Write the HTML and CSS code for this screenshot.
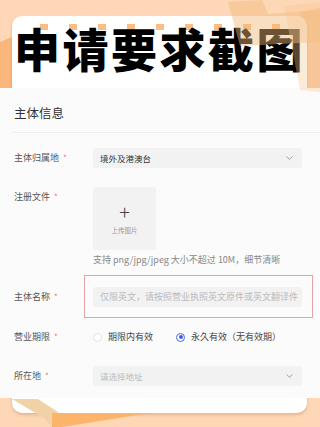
FILE: index.html
```html
<!DOCTYPE html>
<html lang="zh">
<head>
    <meta charset="UTF-8">
    <meta name="viewport" content="width=device-width, initial-scale=1.0">
    <title>申请要求截图</title>
    <link rel="stylesheet" href="styles.css">
</head>
<body>
    <div class="page">
        <svg class="deco deco-back" width="320" height="427" viewBox="0 0 320 427">
            <polygon points="0,42 14,36 14,90 0,90" fill="#fbb67c"/>
            <polygon points="300,12 320,8 320,90 300,90" fill="#f8c79b"/>
        </svg>

        <div class="card">
            <div class="banner">
                <div class="dots">
                    <span></span><span></span><span></span><span></span><span></span>
                    <span></span><span></span><span></span><span></span>
                </div>
                <h1 class="title">申请要求截图</h1>
            </div>

            <div class="shot">
                <div class="shot-head">主体信息</div>

                <div class="form">
                    <div class="row row-select">
                        <label>主体归属地<i>*</i></label>
                        <div class="select">
                            <span>境外及港澳台</span>
                            <svg class="chev" width="7" height="4" viewBox="0 0 7 4"><path d="M0.5 0.5 L3.5 3.3 L6.5 0.5" fill="none" stroke="#999" stroke-width="0.9"/></svg>
                        </div>
                    </div>

                    <div class="row row-upload">
                        <label>注册文件<i>*</i></label>
                        <div>
                            <div class="upload">
                                <span class="plus">+</span>
                                <span class="upload-text">上传图片</span>
                            </div>
                            <p class="hint">支持 png/jpg/jpeg 大小不超过 10M，细节清晰</p>
                        </div>
                    </div>

                    <div class="row row-name">
                        <label>主体名称<i>*</i></label>
                        <div class="mark">
                            <div class="input">仅限英文，请按照营业执照英文原件或英文翻译件</div>
                        </div>
                    </div>

                    <div class="row row-radio">
                        <label>营业期限<i>*</i></label>
                        <div class="radios">
                            <span class="radio"><b class="dot"></b>期限内有效</span>
                            <span class="radio checked"><b class="dot"></b>永久有效（无有效期）</span>
                        </div>
                    </div>

                    <div class="row row-select row-addr">
                        <label>所在地<i>*</i></label>
                        <div class="select">
                            <span class="ph">请选择地址</span>
                            <svg class="chev" width="7" height="4" viewBox="0 0 7 4"><path d="M0.5 0.5 L3.5 3.3 L6.5 0.5" fill="none" stroke="#999" stroke-width="0.9"/></svg>
                        </div>
                    </div>
                </div>
            </div>
        </div>

        <svg class="deco deco-front" width="320" height="427" viewBox="0 0 320 427">
            <polygon points="228,2 262,0 268,14 320,10 320,42 240,46" fill="#f2b877" fill-opacity="0.45"/>
            <polygon points="284,6 320,2 320,92 300,90" fill="#f6c592" fill-opacity="0.35"/>
            <polygon points="12,399 38,399 58,412 52,427 44,418" fill="#f1d2a6"/>
            <polygon points="52,413 150,413 62,427 52,427" fill="#fbb46a"/>
        </svg>
    </div>
</body>
</html>
```

FILE: styles.css
```css
body {
    margin: 0;
    padding: 0;
    background-color: #fdd7b6;
    font-family: "Noto Sans CJK SC", "Noto Sans", sans-serif;
}

.page {
    position: relative;
    width: 320px;
    height: 427px;
    overflow: hidden;
}

.deco {
    position: absolute;
    left: 0;
    top: 0;
    pointer-events: none;
}

.deco-back {
    z-index: 0;
}

.deco-front {
    z-index: 2;
}

.card {
    position: relative;
    z-index: 1;
    margin: 16px 13px 0 12px;
    background: #fff;
    border-radius: 10px;
    padding-bottom: 15px;
    box-shadow: 0 2px 3px rgba(190, 120, 60, 0.35);
}

.banner {
    height: 72px;
}

.dots {
    display: flex;
    justify-content: center;
    gap: 21px;
    padding-top: 8px;
    height: 6px;
}

.dots span {
    width: 8px;
    height: 6px;
    background: #fbbd84;
}

.title {
    margin: -11px 0 0;
    font-size: 46px;
    line-height: 56px;
    font-weight: 900;
    color: #000;
    text-align: center;
    letter-spacing: 2.5px;
    white-space: nowrap;
}

.shot {
    margin: 0 -13px 0 -12px;
    background: #fbfbfb;
    padding-bottom: 12px;
}

.shot-head {
    box-sizing: border-box;
    height: 45px;
    padding: 4px 0 0 1px;
    margin-left: 13px;
    display: flex;
    align-items: center;
    font-size: 12.5px;
    color: #333;
    border-bottom: 1px solid #eeeeee;
}

.form {
    padding-left: 14px;
}

.row {
    display: grid;
    grid-template-columns: 79px 209px;
    font-size: 9px;
}

.row label {
    color: #555;
    line-height: 20px;
}

.row label i {
    font-style: normal;
    color: #e87070;
    margin-left: 4px;
    font-size: 8px;
}

.row-select {
    margin-top: 15px;
}

.select {
    height: 20px;
    background: #f2f2f2;
    border-radius: 3px;
    display: flex;
    align-items: center;
    justify-content: space-between;
    padding: 0 9px 0 7px;
    color: #333;
    font-size: 8.5px;
}

.select .ph {
    color: #bbb;
}

.row-upload {
    margin-top: 19px;
}

.upload {
    width: 63px;
    height: 63px;
    background: #f2f2f2;
    border-radius: 3px;
    display: flex;
    flex-direction: column;
    align-items: center;
    justify-content: center;
}

.plus {
    font-size: 20px;
    line-height: 18px;
    font-weight: 300;
    color: #444;
}

.upload-text {
    margin-top: 4px;
    font-size: 6.5px;
    color: #999;
}

.hint {
    margin: 4px 0 0;
    line-height: 12px;
    font-size: 9px;
    color: #888;
    white-space: nowrap;
}

.row-name {
    margin-top: 9px;
    align-items: center;
}

.mark {
    margin: 0 -11px 0 -9px;
    padding: 11px 10px 10px 8px;
    border: 1.5px solid #e5a4a6;
}

.input {
    height: 20px;
    line-height: 20px;
    background: #f2f2f2;
    border-radius: 3px;
    padding-left: 7px;
    color: #bbb;
    white-space: nowrap;
    overflow: hidden;
}

.row-radio {
    margin-top: 9px;
}

.radios {
    display: flex;
    align-items: center;
    gap: 23px;
    color: #444;
    line-height: 20px;
}

.radio {
    display: flex;
    align-items: center;
    gap: 6px;
}

.dot {
    box-sizing: border-box;
    width: 9px;
    height: 9px;
    border-radius: 50%;
    border: 1px solid #e2e2e2;
    background: #fff;
    display: flex;
    align-items: center;
    justify-content: center;
}

.checked .dot {
    border-color: #4766e6;
}

.checked .dot::after {
    content: "";
    width: 4px;
    height: 4px;
    border-radius: 50%;
    background: #3f5fe4;
}

.row-addr {
    margin-top: 19px;
}
```
